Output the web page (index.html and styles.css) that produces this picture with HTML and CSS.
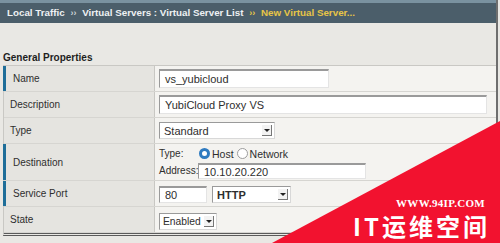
FILE: index.html
```html
<!DOCTYPE html>
<html lang="en">

<head>
    <meta charset="UTF-8">
    <title>New Virtual Server</title>
    <link rel="stylesheet" href="styles.css">
</head>

<body>
    <div class="page">
        <div class="breadcrumb">
            Local Traffic <span class="sep">&#8250;&#8250;</span> Virtual Servers : Virtual Server List
            <span class="sep current">&#8250;&#8250;</span> <span class="current">New Virtual Server...</span>
        </div>

        <h2 class="section-title">General Properties</h2>

        <div class="props">
            <div class="row">
                <div class="label required">Name</div>
                <div class="value"><span class="field name-field">vs_yubicloud</span></div>
            </div>
            <div class="row">
                <div class="label">Description</div>
                <div class="value"><span class="field desc-field">YubiCloud Proxy VS</span></div>
            </div>
            <div class="row">
                <div class="label">Type</div>
                <div class="value">
                    <span class="select type-select">Standard<span class="arrow"></span></span>
                </div>
            </div>
            <div class="row tall">
                <div class="label required">Destination</div>
                <div class="value dest">
                    <div class="dest-line">
                        <span class="dest-label">Type:</span>
                        <span class="radio checked"></span><span class="opt">Host</span>
                        <span class="radio"></span><span class="opt">Network</span>
                    </div>
                    <div class="dest-line">
                        <span class="dest-label">Address:</span>
                        <span class="field addr-field">10.10.20.220</span>
                    </div>
                </div>
            </div>
            <div class="row">
                <div class="label required">Service Port</div>
                <div class="value port">
                    <span class="field port-field">80</span>
                    <span class="select http-select">HTTP<span class="arrow"></span></span>
                </div>
            </div>
            <div class="row">
                <div class="label">State</div>
                <div class="value">
                    <span class="select state-select">Enabled<span class="arrow"></span></span>
                </div>
            </div>
        </div>
    </div>

    <div class="watermark">
        <div class="wm-url">WWW.94IP.COM</div>
        <div class="wm-name">IT运维空间</div>
    </div>
</body>

</html>
```

FILE: styles.css
```css
body {
    margin: 0;
    width: 500px;
    height: 243px;
    overflow: hidden;
    position: relative;
    background-color: #e9e8e4;
    font-family: 'Liberation Sans', Arial, Helvetica, sans-serif;
    font-size: 11px;
    color: #2e2e2e;
}

.page {
    width: 496px;
    height: 243px;
    border-right: 2px solid #6e6e6e;
}

.breadcrumb {
    height: 20px;
    line-height: 20px;
    padding-left: 7px;
    border-top: 3px solid #7a92a0;
    background-color: #4b5e6a;
    color: #eef1f3;
    font-weight: bold;
    font-size: 9.8px;
    white-space: nowrap;
}

.breadcrumb .sep {
    font-size: 9px;
    margin: 0 3px;
    color: #c9d0d5;
}

.breadcrumb .current {
    color: #e7c547;
}

.section-title {
    margin: 29px 0 0 3px;
    height: 13px;
    font-size: 10px;
    font-weight: bold;
    color: #1e1e1e;
}

.props {
    margin-left: 3px;
    border-top: 1px solid #c9c8c4;
    border-left: 1px solid #c9c8c4;
    border-bottom: 3px double #5a5a5a;
}

.row {
    display: grid;
    grid-template-columns: 151px 1fr;
    height: 25px;
    border-bottom: 1px solid #d6d5d1;
}

.row.tall {
    height: 36px;
}

.label {
    display: flex;
    align-items: center;
    padding-left: 6px;
    background-color: #e5e4e0;
    border-right: 1px solid #c8c7c3;
    font-size: 10px;
}

.label.required {
    border-left: 3px solid #1f6e99;
    margin-left: -1px;
    padding-left: 7px;
}

.value {
    display: flex;
    align-items: center;
    gap: 5px;
    padding-left: 4px;
    background-color: #f4f3f0;
}

.field {
    display: inline-block;
    box-sizing: border-box;
    height: 19px;
    line-height: 17px;
    padding-left: 5px;
    background-color: #fff;
    border-top: 2px solid #9a9a9a;
    border-left: 1px solid #9a9a9a;
    border-right: 1px solid #e4e4e4;
    border-bottom: 1px solid #e4e4e4;
    font-size: 11px;
}

.name-field {
    width: 170px;
}

.desc-field {
    width: 328px;
}

.addr-field {
    width: 168px;
    height: 16px;
    line-height: 14px;
}

.port-field {
    width: 48px;
    height: 17px;
    line-height: 15px;
}

.select {
    display: inline-flex;
    align-items: center;
    justify-content: space-between;
    box-sizing: border-box;
    height: 17px;
    padding: 0 2px 0 4px;
    background-color: #fff;
    border-top: 1px solid #9a9a9a;
    border-left: 1px solid #9a9a9a;
    border-right: 1px solid #d8d8d8;
    border-bottom: 1px solid #d8d8d8;
    font-size: 11px;
}

.arrow {
    width: 10px;
    height: 11px;
    box-sizing: border-box;
    border-right: 1px solid #777;
    border-bottom: 1px solid #777;
    background-color: #f3f3f3;
    position: relative;
}

.arrow::after {
    content: '';
    position: absolute;
    left: 2px;
    top: 4px;
    border-left: 3px solid transparent;
    border-right: 3px solid transparent;
    border-top: 3px solid #222;
}

.type-select {
    width: 116px;
}

.http-select {
    width: 79px;
    font-weight: bold;
}

.state-select {
    width: 58px;
    margin-top: 4px;
    padding-left: 3px;
    font-size: 10.3px;
}

.dest {
    flex-direction: column;
    align-items: flex-start;
    justify-content: center;
    gap: 1px;
    font-size: 10px;
}

.dest-line {
    display: flex;
    align-items: center;
    height: 16px;
}

.dest-label {
    width: 39px;
}

.opt {
    font-size: 10.5px;
}

.radio {
    display: inline-block;
    box-sizing: border-box;
    width: 11px;
    height: 11px;
    margin: 0 2px 0 1px;
    border-radius: 50%;
    border: 1px solid #9c9c9c;
    background-color: #fff;
}

.radio.checked {
    border: 3px solid #2f7bc0;
}

.opt + .radio {
    margin-left: 3px;
}

.port {
    gap: 5px;
    padding-top: 2px;
}

.watermark {
    position: absolute;
    right: 0;
    bottom: 0;
    width: 228px;
    height: 122px;
    background-color: #f2122f;
    clip-path: polygon(100% 0, 100% 100%, 0 100%);
    color: #fff;
    display: flex;
    flex-direction: column;
    align-items: flex-end;
    justify-content: flex-end;
}

.wm-url {
    margin: 0 15px 4px 0;
    font-family: 'Liberation Serif', 'Times New Roman', serif;
    font-weight: bold;
    font-size: 11px;
    line-height: 12px;
    letter-spacing: 0.3px;
}

.wm-name {
    margin: 0 10px 4px 0;
    font-family: 'Noto Sans CJK SC', sans-serif;
    font-weight: bold;
    font-size: 24px;
    line-height: 26px;
    letter-spacing: 3px;
}
```
